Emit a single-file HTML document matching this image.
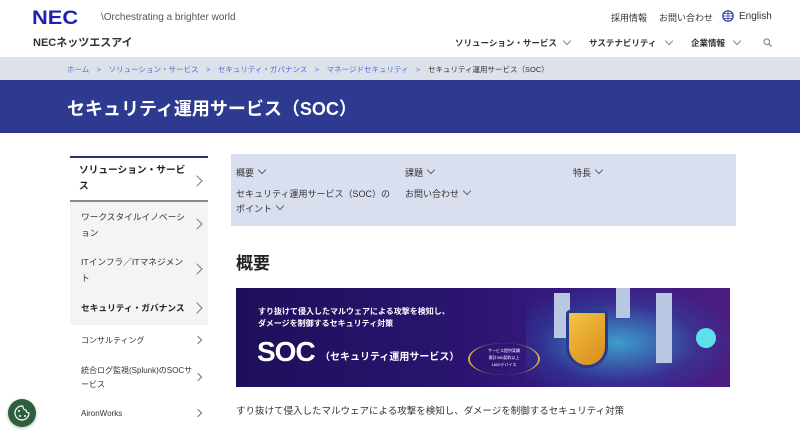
<!DOCTYPE html>
<html><head><meta charset="utf-8"><style>
*{margin:0;padding:0;box-sizing:border-box}
body{width:800px;height:432px;overflow:hidden;background:#fff;font-family:"Liberation Sans","Noto Sans CJK JP",sans-serif;color:#222;position:relative}
.a{position:absolute;white-space:nowrap}
.chev{display:inline-block;width:6px;height:6px;border-right:1px solid #666;border-bottom:1px solid #666;transform:rotate(45deg);margin-left:5px;position:relative;top:-3px}
.hc{position:absolute;width:6px;height:6px;border-right:1px solid #888;border-bottom:1px solid #888;transform:rotate(45deg)}
.rc{position:absolute;right:7px;width:8px;height:8px;border-right:1px solid #777;border-top:1px solid #777;transform:rotate(45deg)}
.side{position:absolute;left:70px;width:138px}
.si{position:absolute;left:70px;width:138px;font-size:8.7px;line-height:16px;padding-left:11px;color:#333;white-space:nowrap}
</style></head><body>
<div class="a" style="left:0;top:0;width:800px;height:57px;background:#fff;box-shadow:0 2px 4px rgba(0,0,0,.08)"></div>
<div class="a" style="left:32px;top:8px;font-size:19px;font-weight:900;color:#1f1fb0;transform:scaleX(1.15);transform-origin:left">NEC</div>
<div class="a" style="left:101px;top:12px;font-size:10px;color:#555">\Orchestrating a brighter world</div>
<div class="a" style="left:33px;top:34px;font-size:11px;font-weight:bold;color:#333">NECネッツエスアイ</div>
<div class="a" style="left:611px;top:11px;font-size:9px;color:#333">採用情報</div>
<div class="a" style="left:659px;top:11px;font-size:9px;color:#333">お問い合わせ</div>
<svg class="a" style="left:722px;top:10px" width="12" height="12" viewBox="0 0 12 12"><circle cx="6" cy="6" r="5.2" fill="none" stroke="#2a3a9a" stroke-width="1.2"/><path d="M1 6h10M6 1v10M2 3.5h8M2 8.5h8" stroke="#2a3a9a" stroke-width=".8" fill="none"/></svg>
<div class="a" style="left:739px;top:11px;font-size:10px;color:#333">English</div>
<div class="a" style="left:455px;top:37px;font-size:8.5px;font-weight:bold;color:#333">ソリューション・サービス</div>
<div class="hc" style="left:564px;top:38px"></div>
<div class="a" style="left:589px;top:37px;font-size:8.5px;font-weight:bold;color:#333">サステナビリティ</div>
<div class="hc" style="left:666px;top:38px"></div>
<div class="a" style="left:691px;top:37px;font-size:8.5px;font-weight:bold;color:#333">企業情報</div>
<div class="hc" style="left:734px;top:38px"></div>
<svg class="a" style="left:763px;top:38px" width="9" height="9" viewBox="0 0 9 9"><circle cx="3.7" cy="3.7" r="2.8" fill="none" stroke="#777" stroke-width="1"/><path d="M5.8 5.8L8.5 8.5" stroke="#777" stroke-width="1.2"/></svg>
<div class="a" style="left:0;top:57px;width:800px;height:23px;background:#dde2ea"></div>
<div class="a" style="left:67px;top:64px;font-size:7.5px;color:#4b6fd0">ホーム　&gt;　ソリューション・サービス　&gt;　セキュリティ・ガバナンス　&gt;　マネージドセキュリティ　&gt;　<span style="color:#333">セキュリティ運用サービス（SOC）</span></div>
<div class="a" style="left:0;top:80px;width:800px;height:53px;background:#2e3a8f"></div>
<div class="a" style="left:67px;top:95px;font-size:18px;font-weight:bold;color:#fff">セキュリティ運用サービス（SOC）</div>

<div class="side" style="top:156px;height:2px;background:#2a2f7a"></div>
<div class="si" style="top:163px;font-size:9.7px;font-weight:bold;line-height:16px;padding-left:9px;color:#222">ソリューション・サービ<br>ス<span class="rc" style="top:14px"></span></div>
<div class="side" style="top:200px;height:2px;background:#888"></div>
<div class="side" style="top:202px;height:123px;background:#f4f4f4"></div>
<div class="si" style="top:209px">ワークスタイルイノベーシ<br>ョン<span class="rc" style="top:11px"></span></div>
<div class="si" style="top:254px">ITインフラ／ITマネジメン<br>ト<span class="rc" style="top:11px"></span></div>
<div class="si" style="top:300px;font-weight:bold;color:#222">セキュリティ・ガバナンス<span class="rc" style="top:4px"></span></div>
<div class="si" style="top:333px;font-size:8px">コンサルティング<span class="rc" style="top:4px;width:6px;height:6px"></span></div>
<div class="si" style="top:364px;font-size:8px;line-height:14px">統合ログ監視(Splunk)のSOCサ<br>ービス<span class="rc" style="top:10px;width:6px;height:6px"></span></div>
<div class="si" style="top:406px;font-size:8px">AironWorks<span class="rc" style="top:4px;width:6px;height:6px"></span></div>

<div class="a" style="left:231px;top:154px;width:505px;height:72px;background:#dadff0"></div>
<div class="a" style="left:236px;top:166px;font-size:9px;color:#333">概要<span class="chev"></span></div>
<div class="a" style="left:405px;top:166px;font-size:9px;color:#333">課題<span class="chev"></span></div>
<div class="a" style="left:573px;top:166px;font-size:9px;color:#333">特長<span class="chev"></span></div>
<div class="a" style="left:236px;top:187px;font-size:9px;line-height:15px;color:#333">セキュリティ運用サービス（SOC）の<br>ポイント<span class="chev"></span></div>
<div class="a" style="left:405px;top:187px;font-size:9px;color:#333">お問い合わせ<span class="chev"></span></div>
<div class="a" style="left:236px;top:249px;font-size:17px;font-weight:bold;color:#222">概要</div>

<div class="a" style="left:236px;top:288px;width:494px;height:99px;background:linear-gradient(90deg,#1e0f5a 0%,#2a1470 45%,#3a1a80 70%,#4a1c80 100%);overflow:hidden">
<div style="position:absolute;left:290px;top:0;width:204px;height:99px;background:radial-gradient(ellipse at 45% 55%,rgba(60,200,230,.75),rgba(40,90,180,.35) 50%,transparent 78%)"></div>
<div style="position:absolute;left:318px;top:5px;width:16px;height:45px;background:#b8c8e2"></div>
<div style="position:absolute;left:380px;top:0;width:14px;height:30px;background:#b8c8e2"></div>
<div style="position:absolute;left:420px;top:5px;width:16px;height:70px;background:#b8c8e2"></div>
<div style="position:absolute;left:330px;top:22px;width:42px;height:58px;background:linear-gradient(135deg,#f3c443,#d98a1c);border:3px solid #2a3a8a;border-radius:4px 4px 22px 22px"></div>
<div style="position:absolute;left:460px;top:40px;width:20px;height:20px;border-radius:50%;background:#5de0ea"></div>
<div style="position:absolute;left:22px;top:18px;font-size:8px;font-weight:bold;color:#fff;line-height:12px">すり抜けて侵入したマルウェアによる攻撃を検知し、<br>ダメージを制御するセキュリティ対策</div>
<div style="position:absolute;left:21px;top:48px;font-size:28px;font-weight:bold;color:#fff;letter-spacing:-1px">SOC</div>
<div style="position:absolute;left:84px;top:60px;font-size:10px;font-weight:bold;color:#fff">（セキュリティ運用サービス）</div>
<div style="position:absolute;left:232px;top:55px;width:72px;height:32px;border-left:2px solid #c9a84a;border-right:2px solid #c9a84a;border-radius:50%;font-size:4px;color:#fff;text-align:center;line-height:7px;padding-top:4px">サービス提供実績<br>累計350契約以上<br>1600デバイス</div>
</div>
<div class="a" style="left:236px;top:403px;font-size:9.5px;color:#333">すり抜けて侵入したマルウェアによる攻撃を検知し、ダメージを制御するセキュリティ対策</div>

<div class="a" style="left:8px;top:399px;width:28px;height:28px;border-radius:50%;background:#2e5e3e;box-shadow:0 1px 3px rgba(0,0,0,.3)"><svg width="28" height="28" viewBox="0 0 28 28"><path d="M14 7a7 7 0 1 0 7 7 3 3 0 0 1-3-3 3 3 0 0 1-3-3 1 1 0 0 0-1-1z" fill="none" stroke="#fff" stroke-width="1.2"/><circle cx="11" cy="12" r="1" fill="#fff"/><circle cx="12" cy="17" r="1" fill="#fff"/><circle cx="17" cy="17" r="1" fill="#fff"/></svg></div>
</body></html>
